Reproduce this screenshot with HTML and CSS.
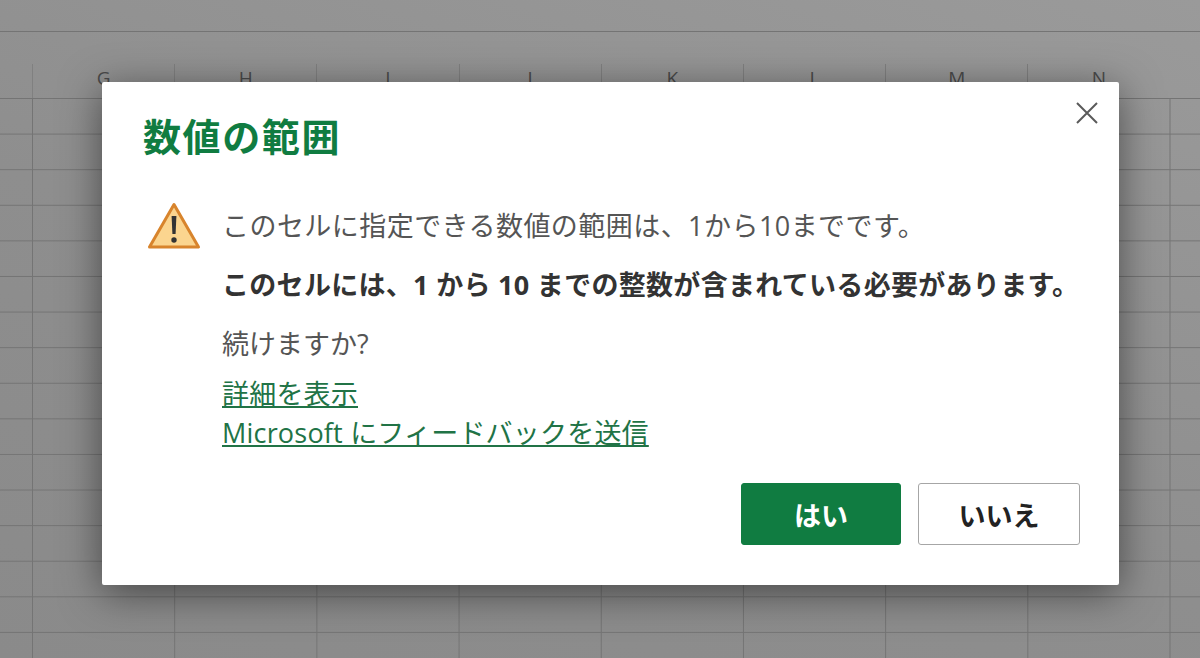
FILE: index.html
```html
<!DOCTYPE html>
<html lang="ja">
<head>
    <meta charset="UTF-8">
    <meta name="viewport" content="width=device-width, initial-scale=1.0">
    <title>数値の範囲</title>
    <link rel="stylesheet" href="styles.css">
</head>
<body>
    <!-- Dimmed sheet behind the dialog -->
    <div class="sheet">
        <div class="toolbar"></div>
        <div class="columns">
            <div class="column">G</div>
            <div class="column">H</div>
            <div class="column">I</div>
            <div class="column">J</div>
            <div class="column">K</div>
            <div class="column">L</div>
            <div class="column">M</div>
            <div class="column">N</div>
        </div>
        <div class="cells"></div>
    </div>

    <!-- Dialog -->
    <div class="dialog">
        <button class="close" aria-label="閉じる">
            <svg width="22" height="22" viewBox="0 0 22 22">
                <path d="M1 1 L21 21 M21 1 L1 21" fill="none" stroke="#5a5a5a" stroke-width="2"/>
            </svg>
        </button>
        <h1 class="title">数値の範囲</h1>
        <div class="content">
            <svg class="warning" width="54" height="48" viewBox="0 0 54 48">
                <path d="M27 2.5 L51.5 45 L2.5 45 Z" fill="#fbd58f" stroke="#d8842c" stroke-width="3" stroke-linejoin="round"/>
                <path d="M24.6 14 H29.4 L28.6 32 H25.4 Z" fill="#333"/>
                <circle cx="27" cy="38" r="2.7" fill="#333"/>
            </svg>
            <div class="messages">
                <p class="message first">このセルに指定できる数値の範囲は、1から10までです。</p>
                <p class="message strong">このセルには、1 から 10 までの整数が含まれている必要があります。</p>
                <p class="message">続けますか?</p>
                <div class="links">
                    <a href="#">詳細を表示</a>
                    <a href="#">Microsoft にフィードバックを送信</a>
                </div>
            </div>
        </div>
        <div class="actions">
            <button class="btn primary">はい</button>
            <button class="btn">いいえ</button>
        </div>
    </div>
</body>
</html>
```

FILE: styles.css
```css
* {
    box-sizing: border-box;
}

html,
body {
    height: 100%;
}

body {
    margin: 0;
    overflow: hidden;
    font-family: "Open Sans", "Noto Sans CJK JP", sans-serif;
    background-color: #939393;
}

.sheet {
    height: 658px;
    display: flex;
    flex-direction: column;
    background: linear-gradient(200deg, #9a9a9a 0%, #8e8e8e 55%, #8a8a8a 100%);
}

.toolbar {
    height: 32px;
    flex-shrink: 0;
    border-bottom: 1px solid #747474;
}

.columns {
    height: 67px;
    flex-shrink: 0;
    display: flex;
    align-items: flex-end;
    padding-left: 32px;
    padding-top: 33px;
    border-bottom: 1px solid #747474;
}

.column {
    width: 142.2px;
    height: 34px;
    flex-shrink: 0;
    border-left: 1px solid #808080;
    text-align: center;
    font-size: 19px;
    line-height: 28px;
    color: #4a4a4a;
}

.cells {
    flex: 1;
    background-image:
        linear-gradient(to bottom, #747474 1px, transparent 1px),
        linear-gradient(to right, #747474 1px, transparent 1px);
    background-size: 100% 35.6px, 142.2px 100%;
    background-position: 0 34.6px, 32px 0;
}

.dialog {
    position: absolute;
    left: 102px;
    top: 82px;
    width: 1017px;
    height: 503px;
    padding: 26px 39px 40px 41px;
    display: flex;
    flex-direction: column;
    background-color: #fff;
    border-radius: 2px;
    box-shadow: 0 8px 40px rgba(0, 0, 0, 0.5);
}

.close {
    position: absolute;
    top: 20px;
    right: 21px;
    width: 22px;
    height: 22px;
    padding: 0;
    display: flex;
    border: none;
    background: none;
}

.title {
    margin: 0;
    font-size: 38px;
    line-height: 56px;
    font-weight: bold;
    letter-spacing: 1.6px;
    color: #107c41;
}

.content {
    display: flex;
    margin-top: 37px;
}

.warning {
    flex-shrink: 0;
    margin-left: 4px;
    margin-top: 1px;
}

.messages {
    margin-left: 21px;
    padding-top: 5px;
    flex: 1;
}

.message {
    margin: 0 0 19px;
    font-size: 27px;
    line-height: 40px;
    color: #555;
}

.first {
    letter-spacing: 0.45px;
}

.strong {
    font-weight: bold;
    letter-spacing: 0.3px;
    color: #333;
}

.links {
    display: flex;
    flex-direction: column;
    align-items: flex-start;
    margin-top: -9px;
}

.links a {
    font-size: 27px;
    line-height: 39px;
    letter-spacing: 0.2px;
    color: #217346;
    text-decoration: underline;
}

.actions {
    margin-top: auto;
    display: flex;
    justify-content: flex-end;
    gap: 17px;
}

.btn {
    width: 162px;
    height: 62px;
    font-family: inherit;
    font-size: 27px;
    font-weight: bold;
    color: #222;
    background-color: #fff;
    border: 1px solid #a6a6a6;
    border-radius: 3px;
}

.primary {
    width: 160px;
    color: #fff;
    background-color: #107c41;
    border-color: #107c41;
}
```
